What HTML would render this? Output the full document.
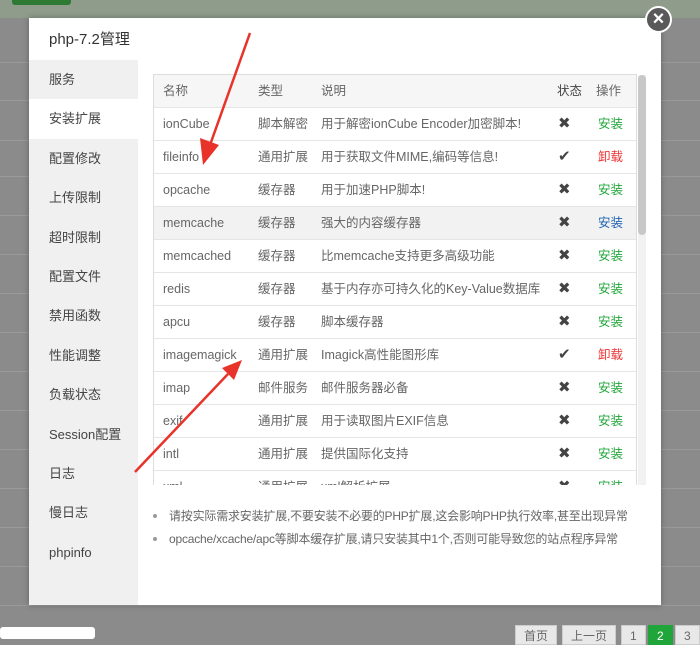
<!DOCTYPE html><html><head><meta charset="utf-8"><style>
*{margin:0;padding:0;box-sizing:border-box}
body{width:700px;height:639px;overflow:hidden;background:#8b8b8b;font-family:"Liberation Sans","Noto Sans CJK SC",sans-serif;position:relative;font-size:12px;color:#555}
.top{position:absolute;left:0;top:0;width:700px;height:18px;background:#8f9c8b}
.btn{position:absolute;left:12px;top:0;width:59px;height:5px;background:#2f7a32;border-radius:0 0 3px 3px}
.bgl{position:absolute;left:0;width:700px;height:1px;background:#9a9a9a}
.modal{position:absolute;left:29px;top:18px;width:632px;height:587px;background:#fff;box-shadow:0 0 6px rgba(0,0,0,.3)}
.title{position:absolute;left:20px;top:12px;font-size:15px;color:#333;line-height:20px}
.side{position:absolute;left:0;top:42px;width:109px;height:545px;background:#f0f0f0}
.side div{height:39.4px;line-height:39.4px;padding-left:20px;font-size:13px;color:#444}
.side .on{background:#fff}
.tbl{position:absolute;left:124px;top:56px;width:484px;height:411px;overflow:hidden;border:1px solid #ddd;border-bottom:none}
.row{position:absolute;left:0;width:484px;height:33px;border-bottom:1px solid #e5e5e5;font-size:12.5px;color:#666}
.row span{position:absolute;top:0;line-height:32px;height:32px;white-space:nowrap}
.c1{left:9px}.c2{left:104px}.c3{left:167px}.c4{left:404px;font-size:15px;color:#444}.c5{left:444px}
.g{color:#20a53a}.r{color:#e33}.b{color:#1e62b0}
.sb{position:absolute;left:609px;top:57px;width:8px;height:410px;background:#f2f2f2}
.sb i{position:absolute;left:0;top:0;width:8px;height:160px;background:#c8c8c8;border-radius:4px}
.note{position:absolute;left:124px;font-size:12px;line-height:16px;color:#666;white-space:nowrap}
.note:before{content:"";position:absolute;left:0;top:6px;width:4px;height:4px;background:#999;border-radius:2px}
.note span{margin-left:16px;letter-spacing:-0.2px}
.close{position:absolute;left:645px;top:6px;width:27px;height:27px;border-radius:50%;background:#595959;border:2px solid #fff;color:#fff;text-align:center;line-height:22px;font-size:20px;font-weight:bold}
.pg{position:absolute;top:625px;height:20px;background:#e8e8e8;border:1px solid #ccc;font-size:12px;line-height:14px;color:#666;padding:3px 8px}
</style></head><body>
<div class="top"><div class="btn"></div></div>
<div class="bgl" style="top:62px"></div><div class="bgl" style="top:100px"></div><div class="bgl" style="top:140px"></div><div class="bgl" style="top:176px"></div><div class="bgl" style="top:215px"></div><div class="bgl" style="top:254px"></div><div class="bgl" style="top:293px"></div><div class="bgl" style="top:332px"></div><div class="bgl" style="top:371px"></div><div class="bgl" style="top:410px"></div><div class="bgl" style="top:449px"></div><div class="bgl" style="top:488px"></div><div class="bgl" style="top:527px"></div><div class="bgl" style="top:566px"></div><div class="bgl" style="top:605px"></div>
<div style="position:absolute;left:0;top:627px;width:95px;height:12px;background:#fff;border-radius:3px"></div>
<div class="pg" style="left:515px">首页</div><div class="pg" style="left:562px">上一页</div><div class="pg" style="left:621px">1</div><div class="pg" style="left:648px;background:#20a53a;color:#fff;border-color:#20a53a">2</div><div class="pg" style="left:675px">3</div>
<div class="modal">
<div class="title">php-7.2管理</div>
<div class="side"><div>服务</div><div class="on">安装扩展</div><div>配置修改</div><div>上传限制</div><div>超时限制</div><div>配置文件</div><div>禁用函数</div><div>性能调整</div><div>负载状态</div><div>Session配置</div><div>日志</div><div>慢日志</div><div>phpinfo</div></div>
<div class="tbl">
<div class="row" style="top:0;background:#f6f6f6"><span class="c1">名称</span><span class="c2">类型</span><span class="c3">说明</span><span class="c4" style="font-size:12.5px;left:403px">状态</span><span class="c5" style="left:442px">操作</span></div>
<div class="row" style="top:33px"><span class="c1">ionCube</span><span class="c2">脚本解密</span><span class="c3">用于解密ionCube Encoder加密脚本!</span><span class="c4">✖</span><span class="c5 g">安装</span></div>
<div class="row" style="top:66px"><span class="c1">fileinfo</span><span class="c2">通用扩展</span><span class="c3">用于获取文件MIME,编码等信息!</span><span class="c4">✔</span><span class="c5 r">卸载</span></div>
<div class="row" style="top:99px"><span class="c1">opcache</span><span class="c2">缓存器</span><span class="c3">用于加速PHP脚本!</span><span class="c4">✖</span><span class="c5 g">安装</span></div>
<div class="row" style="top:132px;background:#f2f2f2"><span class="c1">memcache</span><span class="c2">缓存器</span><span class="c3">强大的内容缓存器</span><span class="c4">✖</span><span class="c5 b">安装</span></div>
<div class="row" style="top:165px"><span class="c1">memcached</span><span class="c2">缓存器</span><span class="c3">比memcache支持更多高级功能</span><span class="c4">✖</span><span class="c5 g">安装</span></div>
<div class="row" style="top:198px"><span class="c1">redis</span><span class="c2">缓存器</span><span class="c3">基于内存亦可持久化的Key-Value数据库</span><span class="c4">✖</span><span class="c5 g">安装</span></div>
<div class="row" style="top:231px"><span class="c1">apcu</span><span class="c2">缓存器</span><span class="c3">脚本缓存器</span><span class="c4">✖</span><span class="c5 g">安装</span></div>
<div class="row" style="top:264px"><span class="c1">imagemagick</span><span class="c2">通用扩展</span><span class="c3">Imagick高性能图形库</span><span class="c4">✔</span><span class="c5 r">卸载</span></div>
<div class="row" style="top:297px"><span class="c1">imap</span><span class="c2">邮件服务</span><span class="c3">邮件服务器必备</span><span class="c4">✖</span><span class="c5 g">安装</span></div>
<div class="row" style="top:330px"><span class="c1">exif</span><span class="c2">通用扩展</span><span class="c3">用于读取图片EXIF信息</span><span class="c4">✖</span><span class="c5 g">安装</span></div>
<div class="row" style="top:363px"><span class="c1">intl</span><span class="c2">通用扩展</span><span class="c3">提供国际化支持</span><span class="c4">✖</span><span class="c5 g">安装</span></div>
<div class="row" style="top:396px"><span class="c1">xml</span><span class="c2">通用扩展</span><span class="c3">xml解析扩展</span><span class="c4">✖</span><span class="c5 g">安装</span></div>
</div>
<div class="sb"><i></i></div>
<div class="note" style="top:490px"><span>请按实际需求安装扩展,不要安装不必要的PHP扩展,这会影响PHP执行效率,甚至出现异常</span></div>
<div class="note" style="top:513px"><span>opcache/xcache/apc等脚本缓存扩展,请只安装其中1个,否则可能导致您的站点程序异常</span></div>
</div>
<div class="close">×</div>
<svg style="position:absolute;left:0;top:0" width="700" height="639">
<line x1="250" y1="33" x2="210" y2="145" stroke="#e8332a" stroke-width="2.5"/>
<polygon points="203,165 200,138 219,145" fill="#e8332a"/>
<line x1="135" y1="472" x2="228" y2="374" stroke="#e8332a" stroke-width="2.5"/>
<polygon points="242,360 222,368 234,380" fill="#e8332a"/>
</svg>
</body></html>
